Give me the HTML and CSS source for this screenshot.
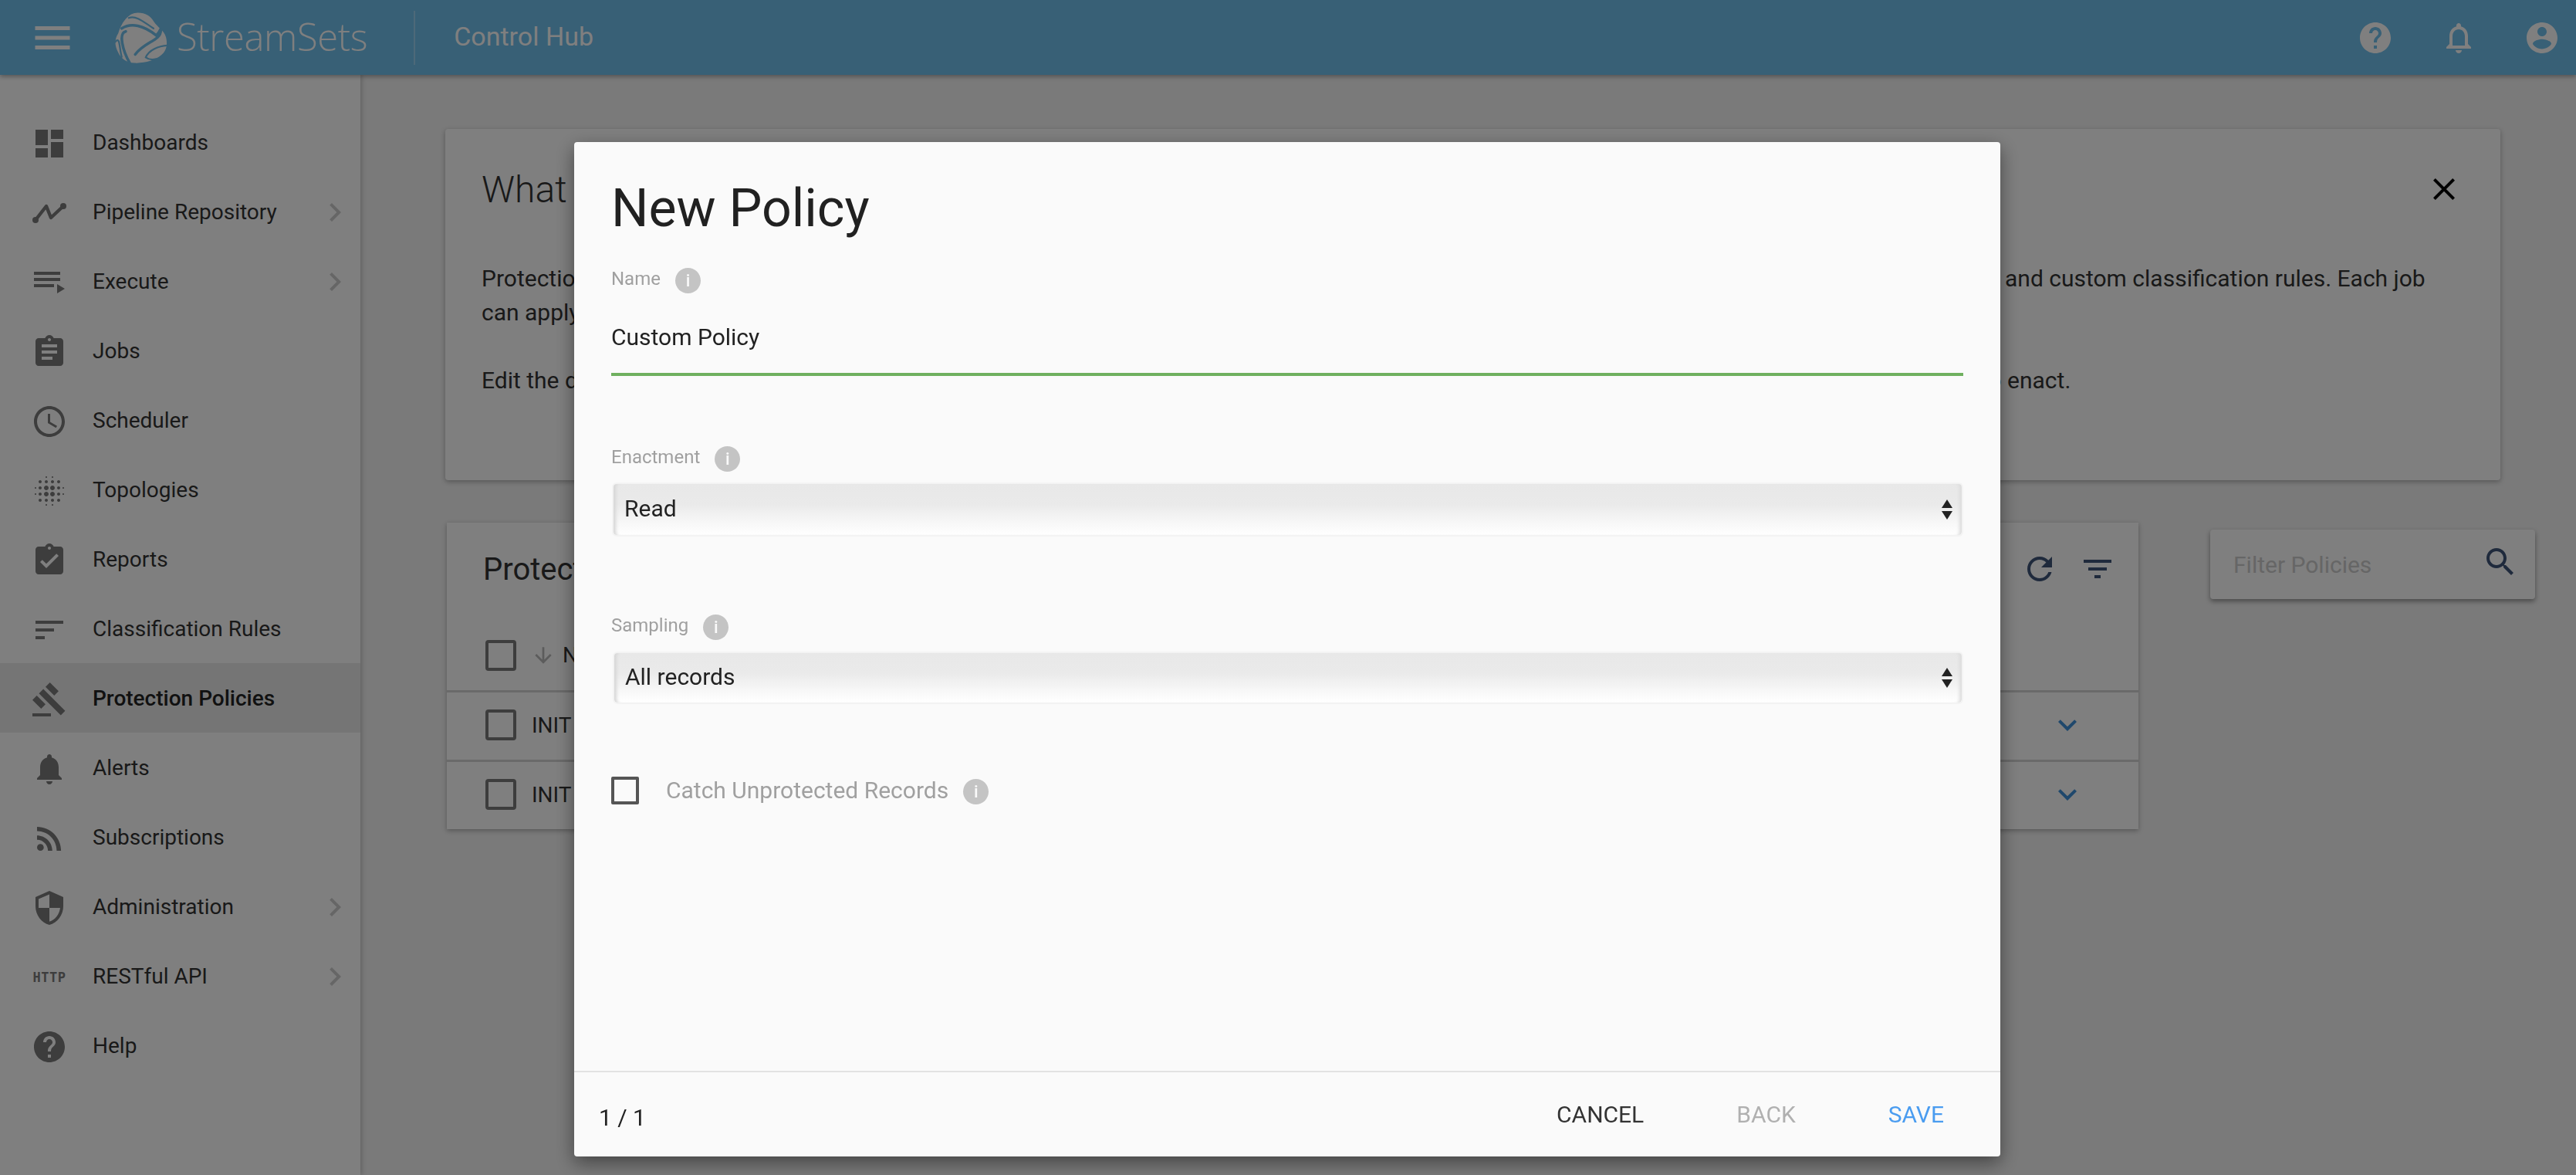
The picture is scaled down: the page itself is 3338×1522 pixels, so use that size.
FILE: index.html
```html
<!DOCTYPE html>
<html lang="en">
<head>
<meta charset="utf-8">
<title>Protection Policies - Control Hub</title>
<link rel="stylesheet" href="styles.css">
</head>
<body>
<div class="app">
  <header class="topbar">
    <svg class="menu-icon" viewBox="0 0 24 24"><path d="M3 18h18v-2H3v2zm0-5h18v-2H3v2zm0-7v2h18V6H3z"/></svg>
    <svg class="logo-mark" viewBox="50 30 216 212">
      <path class="logo-ball" d="M145 37C175 37 195 50 208 72C222 95 250 108 257 135C263 160 262 185 240 205C215 228 170 240 130 238C100 236 78 222 66 196C52 170 50 145 66 120C72 100 80 80 96 62C110 46 125 37 145 37Z"/>
      <path class="logo-cut thin" d="M108 58C140 46 172 78 207 100"/>
      <path class="logo-cut" d="M80 100C118 76 168 88 218 128C226 120 232 112 236 102"/>
      <path class="logo-cut" d="M236 108C236 150 172 152 134 204"/>
      <path class="logo-cut thin" d="M262 168C228 170 188 186 176 216C190 226 205 226 218 222"/>
      <path class="logo-cut" d="M96 112C66 118 84 190 112 238"/>
      <path class="logo-cut thin" d="M54 154C74 128 70 180 80 214"/>
    </svg>
    <span class="brand">StreamSets</span>
    <span class="brand-rule"></span>
    <span class="product">Control Hub</span>
    <span class="topbar-actions">
      <svg class="top-icon" viewBox="0 0 24 24"><path d="M12 2C6.48 2 2 6.48 2 12s4.48 10 10 10 10-4.48 10-10S17.52 2 12 2zm1 17h-2v-2h2v2zm2.07-7.75l-.9.92C13.45 12.9 13 13.5 13 15h-2v-.5c0-1.1.45-2.1 1.17-2.83l1.24-1.26c.37-.36.59-.86.59-1.41 0-1.1-.9-2-2-2s-2 .9-2 2H8c0-2.21 1.79-4 4-4s4 1.79 4 4c0 .88-.36 1.68-.93 2.25z"/></svg>
      <svg class="top-icon" viewBox="0 0 24 24"><path d="M12 22c1.1 0 2-.9 2-2h-4c0 1.1.9 2 2 2zm6-6v-5c0-3.07-1.63-5.64-4.5-6.32V4c0-.83-.67-1.5-1.5-1.5s-1.5.67-1.5 1.5v.68C7.64 5.36 6 7.92 6 11v5l-2 2v1h16v-1l-2-2zm-2 1H8v-6c0-2.48 1.51-4.5 4-4.5s4 2.02 4 4.5v6z"/></svg>
      <svg class="top-icon" viewBox="0 0 24 24"><path d="M12 2C6.48 2 2 6.48 2 12s4.48 10 10 10 10-4.48 10-10S17.52 2 12 2zm0 3c1.66 0 3 1.34 3 3s-1.34 3-3 3-3-1.34-3-3 1.34-3 3-3zm0 14.2c-2.5 0-4.71-1.28-6-3.22.03-1.99 4-3.08 6-3.08 1.99 0 5.97 1.09 6 3.08-1.29 1.94-3.5 3.22-6 3.22z"/></svg>
    </span>
  </header>

  <div class="body-row">
    <nav class="sidebar">
      <a class="nav-item"><svg class="nav-icon" viewBox="0 0 24 24"><path d="M3 13h8V3H3v10zm0 8h8v-6H3v6zm10 0h8V11h-8v10zm0-18v6h8V3h-8z"/></svg><span class="nav-label">Dashboards</span></a>
      <a class="nav-item"><svg class="nav-icon" viewBox="0 0 24 24"><polyline class="line-stroke" points="3,16.5 10,7.5 13,15 21,7.5"/><circle cx="3" cy="16.5" r="2"/><circle cx="21" cy="7.5" r="2"/></svg><span class="nav-label">Pipeline Repository</span><svg class="nav-chevron" viewBox="0 0 24 24"><path d="M10 6L8.59 7.41 13.17 12l-4.58 4.59L10 18l6-6z"/></svg></a>
      <a class="nav-item"><svg class="nav-icon" viewBox="0 0 24 24"><path d="M19 9H2v2h17V9zm0-4H2v2h17V5zM2 15h13v-2H2v2zm15-2v6l5-3-5-3z"/></svg><span class="nav-label">Execute</span><svg class="nav-chevron" viewBox="0 0 24 24"><path d="M10 6L8.59 7.41 13.17 12l-4.58 4.59L10 18l6-6z"/></svg></a>
      <a class="nav-item"><svg class="nav-icon" viewBox="0 0 24 24"><path d="M19 3h-4.18C14.4 1.84 13.3 1 12 1c-1.3 0-2.4.84-2.82 2H5c-1.1 0-2 .9-2 2v14c0 1.1.9 2 2 2h14c1.1 0 2-.9 2-2V5c0-1.1-.9-2-2-2zm-7 0c.55 0 1 .45 1 1s-.45 1-1 1-1-.45-1-1 .45-1 1-1zm2 14H7v-2h7v2zm3-4H7v-2h10v2zm0-4H7V7h10v2z"/></svg><span class="nav-label">Jobs</span></a>
      <a class="nav-item"><svg class="nav-icon" viewBox="0 0 24 24"><path d="M11.99 2C6.47 2 2 6.48 2 12s4.47 10 9.99 10C17.52 22 22 17.52 22 12S17.52 2 11.99 2zM12 20c-4.42 0-8-3.58-8-8s3.58-8 8-8 8 3.58 8 8-3.58 8-8 8zm.5-13H11v6l5.25 3.15.75-1.23-4.5-2.67z"/></svg><span class="nav-label">Scheduler</span></a>
      <a class="nav-item"><svg class="nav-icon" viewBox="0 0 24 24"><path d="M6 13c-.55 0-1 .45-1 1s.45 1 1 1 1-.45 1-1-.45-1-1-1zm0 4c-.55 0-1 .45-1 1s.45 1 1 1 1-.45 1-1-.45-1-1-1zm0-8c-.55 0-1 .45-1 1s.45 1 1 1 1-.45 1-1-.45-1-1-1zm-3 .5c-.28 0-.5.22-.5.5s.22.5.5.5.5-.22.5-.5-.22-.5-.5-.5zM6 5c-.55 0-1 .45-1 1s.45 1 1 1 1-.45 1-1-.45-1-1-1zm15 5.5c.28 0 .5-.22.5-.5s-.22-.5-.5-.5-.5.22-.5.5.22.5.5.5zM14 7c.55 0 1-.45 1-1s-.45-1-1-1-1 .45-1 1 .45 1 1 1zm0-3.5c.28 0 .5-.22.5-.5s-.22-.5-.5-.5-.5.22-.5.5.22.5.5.5zm-11 10c-.28 0-.5.22-.5.5s.22.5.5.5.5-.22.5-.5-.22-.5-.5-.5zm7 7c-.28 0-.5.22-.5.5s.22.5.5.5.5-.22.5-.5-.22-.5-.5-.5zm0-17c.28 0 .5-.22.5-.5s-.22-.5-.5-.5-.5.22-.5.5.22.5.5.5zM10 7c.55 0 1-.45 1-1s-.45-1-1-1-1 .45-1 1 .45 1 1 1zm0 5.5c-.83 0-1.5.67-1.5 1.5s.67 1.5 1.5 1.5 1.5-.67 1.5-1.5-.67-1.5-1.5-1.5zm8 .5c-.55 0-1 .45-1 1s.45 1 1 1 1-.45 1-1-.45-1-1-1zm0 4c-.55 0-1 .45-1 1s.45 1 1 1 1-.45 1-1-.45-1-1-1zm0-8c-.55 0-1 .45-1 1s.45 1 1 1 1-.45 1-1-.45-1-1-1zm0-4c-.55 0-1 .45-1 1s.45 1 1 1 1-.45 1-1-.45-1-1-1zm3 8.5c-.28 0-.5.22-.5.5s.22.5.5.5.5-.22.5-.5-.22-.5-.5-.5zM14 17c-.55 0-1 .45-1 1s.45 1 1 1 1-.45 1-1-.45-1-1-1zm0 3.5c-.28 0-.5.22-.5.5s.22.5.5.5.5-.22.5-.5-.22-.5-.5-.5zm-4-12c-.83 0-1.5.67-1.5 1.5s.67 1.5 1.5 1.5 1.5-.67 1.5-1.5-.67-1.5-1.5-1.5zm0 8.5c-.55 0-1 .45-1 1s.45 1 1 1 1-.45 1-1-.45-1-1-1zm4-4.5c-.83 0-1.5.67-1.5 1.5s.67 1.5 1.5 1.5 1.5-.67 1.5-1.5-.67-1.5-1.5-1.5zm0-4c-.83 0-1.5.67-1.5 1.5s.67 1.5 1.5 1.5 1.5-.67 1.5-1.5-.67-1.5-1.5-1.5z"/></svg><span class="nav-label">Topologies</span></a>
      <a class="nav-item"><svg class="nav-icon" viewBox="0 0 24 24"><path d="M19 3h-4.18C14.4 1.84 13.3 1 12 1c-1.3 0-2.4.84-2.82 2H5c-1.1 0-2 .9-2 2v14c0 1.1.9 2 2 2h14c1.1 0 2-.9 2-2V5c0-1.1-.9-2-2-2zm-7 0c.55 0 1 .45 1 1s-.45 1-1 1-1-.45-1-1 .45-1 1-1zm-2 14l-4-4 1.41-1.41L10 14.17l6.59-6.59L18 9l-8 8z"/></svg><span class="nav-label">Reports</span></a>
      <a class="nav-item"><svg class="nav-icon" viewBox="0 0 24 24"><path d="M3 18h6v-2H3v2zM3 6v2h18V6H3zm0 7h12v-2H3v2z"/></svg><span class="nav-label">Classification Rules</span></a>
      <a class="nav-item is-active"><svg class="nav-icon" viewBox="0 0 24 24"><path d="M1 21h12v2H1zM5.245 8.07l2.83-2.827 14.14 14.142-2.828 2.828zM12.317 1l5.657 5.656-2.83 2.83-5.654-5.66zM3.825 9.485l5.657 5.657-2.828 2.828-5.657-5.657z"/></svg><span class="nav-label">Protection Policies</span></a>
      <a class="nav-item"><svg class="nav-icon" viewBox="0 0 24 24"><path d="M12 22c1.1 0 2-.9 2-2h-4c0 1.1.89 2 2 2zm6-6v-5c0-3.07-1.64-5.64-4.5-6.32V4c0-.83-.67-1.5-1.5-1.5s-1.5.67-1.5 1.5v.68C7.63 5.36 6 7.92 6 11v5l-2 2v1h16v-1l-2-2z"/></svg><span class="nav-label">Alerts</span></a>
      <a class="nav-item"><svg class="nav-icon" viewBox="0 0 24 24"><circle cx="6.18" cy="17.82" r="2.18"/><path d="M4 4.44v2.83c7.03 0 12.73 5.7 12.73 12.73h2.83c0-8.59-6.97-15.56-15.56-15.56zm0 5.66v2.83c3.9 0 7.07 3.17 7.07 7.07h2.83c0-5.47-4.43-9.9-9.9-9.9z"/></svg><span class="nav-label">Subscriptions</span></a>
      <a class="nav-item"><svg class="nav-icon" viewBox="0 0 24 24"><path d="M12 1L3 5v6c0 5.55 3.84 10.74 9 12 5.16-1.26 9-6.45 9-12V5l-9-4zm0 10.99h7c-.53 4.12-3.28 7.79-7 8.94V12H5V6.3l7-3.11v8.8z"/></svg><span class="nav-label">Administration</span><svg class="nav-chevron" viewBox="0 0 24 24"><path d="M10 6L8.59 7.41 13.17 12l-4.58 4.59L10 18l6-6z"/></svg></a>
      <a class="nav-item"><span class="http-icon">HTTP</span><span class="nav-label">RESTful API</span><svg class="nav-chevron" viewBox="0 0 24 24"><path d="M10 6L8.59 7.41 13.17 12l-4.58 4.59L10 18l6-6z"/></svg></a>
      <a class="nav-item"><svg class="nav-icon" viewBox="0 0 24 24"><path d="M12 2C6.48 2 2 6.48 2 12s4.48 10 10 10 10-4.48 10-10S17.52 2 12 2zm1 17h-2v-2h2v2zm2.07-7.75l-.9.92C13.45 12.9 13 13.5 13 15h-2v-.5c0-1.1.45-2.1 1.17-2.83l1.24-1.26c.37-.36.59-.86.59-1.41 0-1.1-.9-2-2-2s-2 .9-2 2H8c0-2.21 1.79-4 4-4s4 1.79 4 4c0 .88-.36 1.68-.93 2.25z"/></svg><span class="nav-label">Help</span></a>
    </nav>

    <main class="content">
      <section class="info-card">
        <div class="info-head">
          <h2 class="info-title">What</h2>
          <svg class="close-icon" viewBox="0 0 24 24"><path d="M19 6.41L17.59 5 12 10.59 6.41 5 5 6.41 10.59 12 5 17.59 6.41 19 12 13.41 17.59 19 19 17.59 13.41 12z"/></svg>
        </div>
        <div class="info-line is-first"><span>Protection</span><span>and custom classification rules. Each job</span></div>
        <div class="info-line"><span>can apply</span></div>
        <div class="info-line info-gap"><span>Edit the default</span><span class="info-tail">to enact.</span></div>
      </section>

      <div class="lower-row">
        <section class="table-card">
          <div class="table-head">
            <h2 class="table-title">Protection</h2>
            <span class="table-tools">
              <svg class="tool-icon" viewBox="0 0 24 24"><path d="M17.65 6.35C16.2 4.9 14.21 4 12 4c-4.42 0-7.99 3.58-7.99 8s3.57 8 7.99 8c3.73 0 6.84-2.55 7.73-6h-2.08c-.82 2.33-3.04 4-5.65 4-3.31 0-6-2.69-6-6s2.69-6 6-6c1.66 0 3.14.69 4.22 1.78L13 11h7V4l-2.35 2.35z"/></svg>
              <svg class="tool-icon" viewBox="0 0 24 24"><path d="M10 18h4v-2h-4v2zM3 6v2h18V6H3zm3 7h12v-2H6v2z"/></svg>
            </span>
          </div>
          <div class="table-row is-header">
            <span class="row-check"></span>
            <svg class="sort-icon" viewBox="0 0 24 24"><path d="M20 12l-1.41-1.41L13 16.17V4h-2v12.17l-5.58-5.59L4 12l8 8 8-8z"/></svg>
            <span class="row-text">Name</span>
          </div>
          <div class="table-row">
            <span class="row-check"></span>
            <span class="row-text">INIT</span>
            <svg class="expand-icon" viewBox="0 0 24 24"><path d="M16.59 8.59L12 13.17 7.41 8.59 6 10l6 6 6-6z"/></svg>
          </div>
          <div class="table-row">
            <span class="row-check"></span>
            <span class="row-text">INIT</span>
            <svg class="expand-icon" viewBox="0 0 24 24"><path d="M16.59 8.59L12 13.17 7.41 8.59 6 10l6 6 6-6z"/></svg>
          </div>
        </section>
        <div class="filter-card">
          <span class="filter-text">Filter Policies</span>
          <svg class="search-icon" viewBox="0 0 24 24"><path d="M15.5 14h-.79l-.28-.27C15.41 12.59 16 11.11 16 9.5 16 5.91 13.09 3 9.5 3S3 5.91 3 9.5 5.91 16 9.5 16c1.61 0 3.09-.59 4.23-1.57l.27.28v.79l5 4.99L20.49 19l-4.99-5zm-6 0C7.01 14 5 11.99 5 9.5S7.01 5 9.5 5 14 7.01 14 9.5 11.99 14 9.5 14z"/></svg>
        </div>
      </div>
    </main>
  </div>
</div>

<div class="backdrop">
  <div class="dialog">
    <div class="dialog-body">
      <h1 class="dialog-title">New Policy</h1>

      <div class="field-label name-label"><span>Name</span><span class="info-dot">i</span></div>
      <input class="text-input" type="text" value="Custom Policy">

      <div class="field-label enact-label"><span>Enactment</span><span class="info-dot">i</span></div>
      <div class="select-wrap">
        <select class="native-select"><option>Read</option></select>
        <span class="select-arrows"><i class="arrow-up"></i><i class="arrow-down"></i></span>
      </div>

      <div class="field-label sampling-label"><span>Sampling</span><span class="info-dot">i</span></div>
      <div class="select-wrap is-second">
        <select class="native-select"><option>All records</option></select>
        <span class="select-arrows"><i class="arrow-up"></i><i class="arrow-down"></i></span>
      </div>

      <label class="check-row">
        <span class="check-box"></span>
        <span class="check-text">Catch Unprotected Records</span>
        <span class="info-dot">i</span>
      </label>
    </div>
    <footer class="dialog-foot">
      <span class="page-count">1 / 1</span>
      <span class="foot-actions">
        <span class="foot-btn">CANCEL</span>
        <span class="foot-btn is-disabled">BACK</span>
        <span class="foot-btn is-primary">SAVE</span>
      </span>
    </footer>
  </div>
</div>
</body>
</html>
```

FILE: styles.css
```css
* { box-sizing: border-box; }
html, body { margin: 0; height: 100%; overflow: hidden; }
body { font-family: Roboto, "Liberation Sans", sans-serif; font-size: 28px; color: #222; background: #f4f4f4; }

.app { display: flex; flex-direction: column; height: 1522px; }

/* Top bar */
.topbar { height: 97px; flex: none; display: flex; align-items: center; background: #70c0ec; color: #fff; box-shadow: 0 2px 6px rgba(0,0,0,.35); position: relative; z-index: 2; }
.menu-icon { width: 60px; height: 60px; margin-left: 38px; fill: #fff; flex: none; }
.logo-mark { width: 70px; height: 69px; margin-left: 50px; flex: none; }
.logo-ball { fill: #fff; }
.logo-cut { fill: none; stroke: #70c0ec; stroke-width: 11; stroke-linecap: round; }
.logo-cut.thin { stroke-width: 7; }
.brand { font-family: "Open Sans", sans-serif; font-weight: 300; font-size: 49px; margin-left: 11px; margin-bottom: 4px; letter-spacing: -.4px; }
.brand-rule { width: 2px; height: 70px; background: rgba(255,255,255,.3); margin-left: 60px; }
.product { font-size: 34px; margin-left: 50px; margin-bottom: 4px; }
.topbar-actions { margin-left: auto; display: flex; gap: 60px; margin-right: 20px; }
.top-icon { width: 48px; height: 48px; fill: #fff; display: block; }

/* Layout */
.body-row { flex: 1; display: flex; min-height: 0; }

/* Sidebar */
.sidebar { width: 467px; flex: none; background: #fff; padding-top: 42px; box-shadow: 2px 0 6px rgba(0,0,0,.2); position: relative; z-index: 1; }
.nav-item { height: 90px; display: flex; align-items: center; padding-left: 40px; padding-right: 9px; color: #333; }
.nav-item.is-active { background: #ebebeb; font-weight: 500; color: #222; }
.nav-icon { width: 48px; height: 48px; flex: none; fill: #7a7a7a; margin-top: 4px; }
.line-stroke { fill: none; stroke: #7a7a7a; stroke-width: 2.2; stroke-linejoin: round; }
.nav-label { margin-left: 32px; flex: 1; }
.nav-chevron { width: 48px; height: 48px; fill: #ccc; flex: none; margin-top: 2px; }
.http-icon { width: 48px; flex: none; text-align: center; font-family: "DejaVu Sans Mono", monospace; font-weight: 700; font-size: 17px; color: #7a7a7a; letter-spacing: .5px; margin-top: 4px; }

/* Main content */
.content { flex: 1; min-width: 0; padding: 70px 98px 0 110px; }

.info-card { height: 455px; background: #fff; border-radius: 4px; padding: 0 47px; box-shadow: 0 2px 6px rgba(0,0,0,.3); }
.info-head { height: 156px; display: flex; align-items: center; justify-content: space-between; }
.info-title { margin: 0; font-size: 48px; font-weight: 300; color: #333; }
.close-icon { width: 48px; height: 48px; fill: #000; margin-right: 2px; }
.info-line { display: grid; grid-template-columns: 1974px 1fr; height: 44px; line-height: 44px; font-size: 30px; color: #333; }
.info-line.is-first { margin-top: 16px; }
.info-gap { margin-top: 44px; }
.info-tail { margin-left: -31px; }

.lower-row { display: flex; align-items: flex-start; margin-top: 55px; }
.table-card { width: 2192px; margin-left: 2px; background: #fff; box-shadow: 0 2px 6px rgba(0,0,0,.3); flex: none; }
.table-head { height: 126px; display: flex; align-items: center; justify-content: space-between; padding: 0 29px 6px 47px; }
.table-title { margin: 0; font-size: 40px; font-weight: 400; color: #333; }
.table-tools { display: flex; gap: 27px; }
.tool-icon { width: 48px; height: 48px; fill: #3e5479; }
.table-row { height: 90px; display: flex; align-items: center; padding-left: 50px; padding-bottom: 3px; border-top: 3px solid #d4d4d4; color: #333; }
.table-row.is-header { height: 91px; border-top: 0; padding-bottom: 0; }
.row-check { width: 40px; height: 40px; border: 4px solid #7a7a7a; border-radius: 4px; flex: none; }
.row-text { margin-left: 20px; }
.is-header .row-text { margin-left: 0; }
.sort-icon { width: 32px; height: 32px; margin-left: 19px; margin-right: 9px; fill: #b8b8b8; }
.expand-icon { width: 48px; height: 48px; fill: #3f90d8; margin-left: auto; margin-right: 68px; }

.filter-card { width: 421px; height: 90px; flex: none; margin-left: 93px; margin-top: 9px; background: #fff; border-radius: 4px; box-shadow: 0 3px 6px rgba(0,0,0,.4); display: flex; align-items: center; justify-content: space-between; padding: 0 21px 0 30px; }
.filter-text { color: #ccc; font-size: 30px; }
.search-icon { width: 48px; height: 48px; fill: #3e5479; margin-top: -6px; }

/* Modal */
.backdrop { position: fixed; inset: 0; background: rgba(0,0,0,.5); z-index: 10; }
.dialog { position: absolute; left: 744px; top: 184px; width: 1848px; height: 1314px; background: #fafafa; border-radius: 4px; display: flex; flex-direction: column; box-shadow: 0 8px 24px rgba(0,0,0,.45); }
.dialog-body { flex: 1; padding: 46px 48px 0; min-height: 0; }
.dialog-title { margin: 0; height: 80px; line-height: 80px; font-size: 68px; font-weight: 400; color: #212121; }

.field-label { display: flex; align-items: center; height: 36px; font-size: 24px; color: #a0a0a0; }
.name-label { margin-top: 33px; }
.enact-label { margin-top: 87px; }
.sampling-label { margin-top: 97px; }
.info-dot { width: 33px; height: 33px; border-radius: 50%; background: #c4c4c4; color: #fafafa; font-size: 22px; font-weight: 500; line-height: 33px; text-align: center; margin-left: 19px; margin-top: 4px; flex: none; }

.text-input { display: block; width: 100%; height: 108px; padding: 11px 0 0; font: inherit; font-size: 30px; color: #222; background: transparent; border: 0; border-bottom: 4px solid #6fb05f; border-radius: 0; outline: 0; }

.select-wrap { position: relative; height: 70px; margin-top: 15px; margin-left: 1px; }
.select-wrap.is-second { height: 68px; margin-top: 16px; margin-left: 2px; }
.native-select { appearance: none; -webkit-appearance: none; display: block; width: 100%; height: 100%; padding: 0 0 3px 14px; font: inherit; font-size: 30px; color: #222; border: 2px solid #f3f3f3; border-radius: 6px; outline: 0; background: linear-gradient(to bottom, #e8e8e8 0%, #eaeaea 40%, #f7f7f7 75%, #fff 100%); box-shadow: inset 6px 0 4px -3px #d6d6d6, inset -6px 0 4px -3px #dcdcdc; }
.select-arrows { position: absolute; right: 14px; top: 0; bottom: 0; display: flex; flex-direction: column; justify-content: center; gap: 4px; }
.arrow-up, .arrow-down { display: block; width: 0; height: 0; border-left: 7px solid transparent; border-right: 7px solid transparent; }
.arrow-up { border-bottom: 11px solid #222; }
.arrow-down { border-top: 11px solid #222; }

.check-row { display: flex; align-items: center; margin-top: 93px; color: #a0a0a0; font-size: 30px; }
.check-box { width: 36px; height: 36px; border: 4px solid #555; border-radius: 2px; flex: none; }
.check-text { margin-left: 35px; }

.dialog-foot { height: 111px; flex: none; border-top: 2px solid #e2e2e2; display: flex; align-items: center; justify-content: space-between; padding: 0 73px 0 32px; }
.page-count { font-size: 30px; color: #222; margin-top: 8px; }
.foot-actions { display: flex; gap: 120px; }
.foot-btn { color: #333; font-size: 30px; font-weight: 400; }
.foot-btn.is-disabled { color: #b0b0b0; }
.foot-btn.is-primary { color: #4a9cf0; }
```
